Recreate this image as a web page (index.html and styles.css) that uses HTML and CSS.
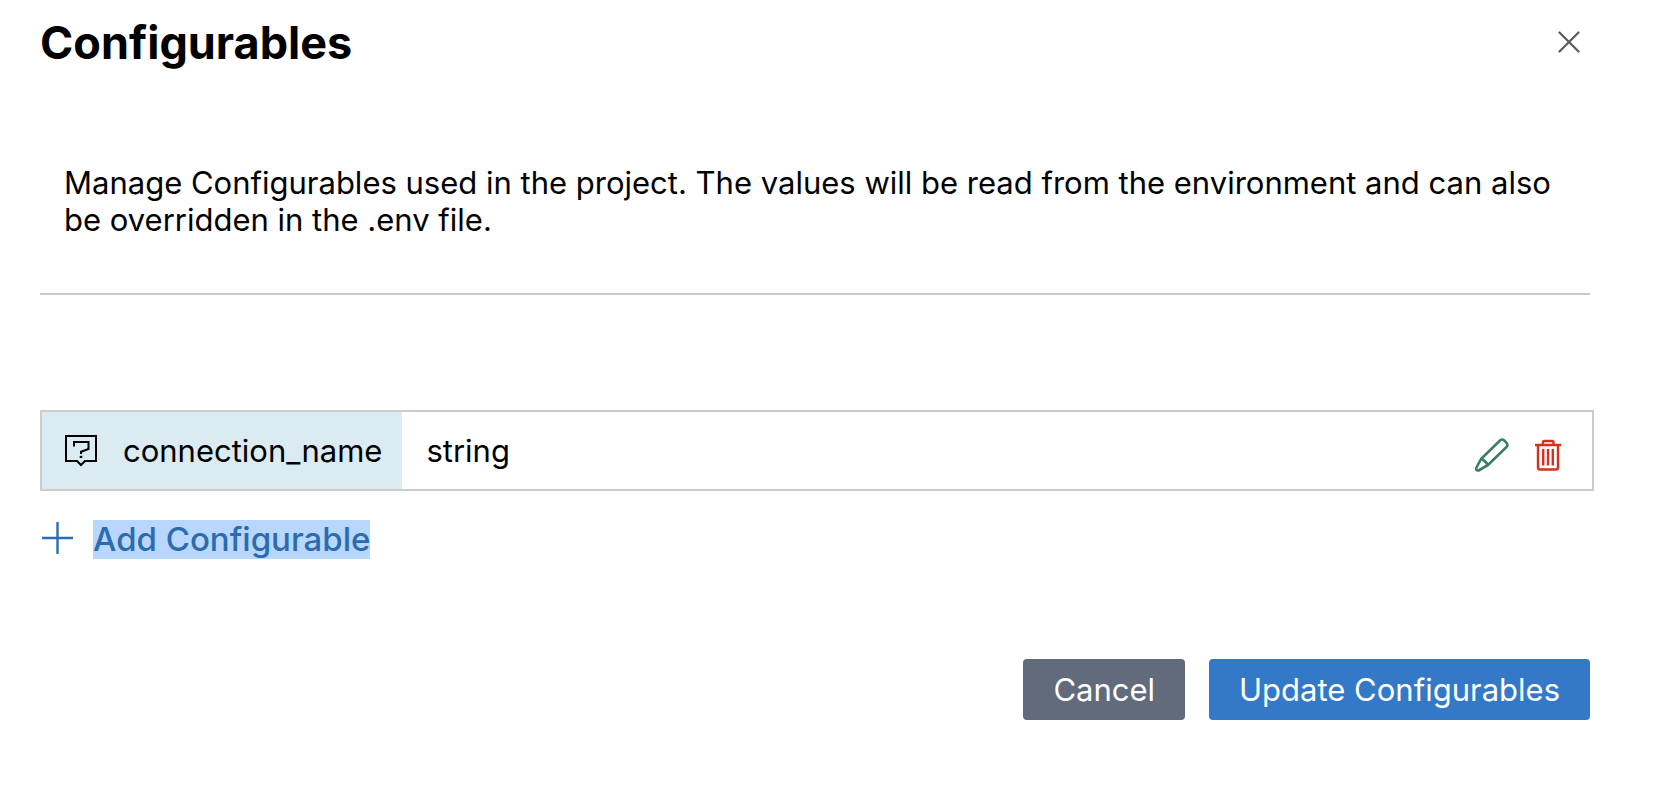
FILE: index.html
```html
<!DOCTYPE html>
<html lang="en">
<head>
<meta charset="utf-8">
<title>Configurables</title>
<meta name="viewport" content="width=device-width, initial-scale=1">
<link rel="stylesheet" href="styles.css">
</head>
<body>
<main class="dialog">
  <header class="dialog-header">
    <h1 class="title">Configurables</h1>
    <button class="icon-button close" type="button" aria-label="Close">
      <svg width="22" height="22" viewBox="0 0 22 22" fill="none" stroke="#5e5e5e" stroke-width="2.300" stroke-linecap="round"><path d="M1.500 1.500l19 19M20.500 1.500l-19 19"/></svg>
    </button>
  </header>
  <p class="intro">Manage Configurables used in the project. The values will be read from the environment and can also be overridden in the .env file.</p>
  <hr class="divider">
  <div class="row">
    <div class="row-name">
      <svg width="32" height="32" viewBox="0 0 32 32" fill="none" stroke="#000" stroke-width="2"><path d="M1 1h30v25H20l-4 4-4-4H1z"/><path d="M9 11.500V7H23.500v7L16 16.800V19" stroke-width="2"/><path d="M16 20.800v2.200" stroke-width="2.600"/></svg>
      <span>connection_name</span>
    </div>
    <span class="row-type">string</span>
    <div class="row-actions">
      <button class="icon-button" type="button" aria-label="Edit connection_name">
        <svg width="34" height="34" viewBox="0 0 34 34" fill="none" stroke="#3a8060" stroke-width="2.600" stroke-linejoin="round"><path d="M6 21L25 2.500Q27 .700 29 2.200L31.500 4.800Q33.300 7 31.500 9L13 27L3.500 32.500Q.500 33 1.500 29.500Z"/><path d="M6 21Q10.500 22.500 13 27"/></svg>
      </button>
      <button class="icon-button" type="button" aria-label="Delete connection_name">
        <svg width="26" height="32" viewBox="0 0 26 32" fill="none" stroke="#d6301d" stroke-width="2.400"><path d="M0 6h26M8 6V3.500Q8 2 9.500 2h7.500Q18.500 2 18.500 3.500V6M3 6v22.500Q3 30.500 5 30.500h16Q23 30.500 23 28.500V6M8.200 10v16.500M13 10v16.500M17.800 10v16.500"/></svg>
      </button>
    </div>
  </div>
  <button class="add" type="button">
    <svg width="32" height="36" viewBox="0 0 32 36" stroke="#2b6cb0" stroke-width="2.400"><path d="M0 16h31M15.500 0v32"/></svg>
    <span class="add-label">Add Configurable</span>
  </button>
  <footer class="actions">
    <button class="button cancel" type="button">Cancel</button>
    <button class="button update" type="submit">Update Configurables</button>
  </footer>
</main>
</body>
</html>
```
FILE: styles.css
```css
* {
  box-sizing: border-box;
}

body {
  margin: 0;
  background: #fff;
  color: #000;
  font-family: Inter, "Liberation Sans", sans-serif;
  font-size: 31px;
  line-height: 37px;
}

button {
  border: 0;
  margin: 0;
  padding: 0;
  background: none;
  font: inherit;
  cursor: pointer;
}

svg {
  display: block;
  flex: none;
}

.dialog {
  padding: 15px 64px 88px 40px;
}

.dialog-header {
  display: flex;
  justify-content: space-between;
  align-items: flex-start;
}

.title {
  margin: 0;
  font-size: 45px;
  line-height: 56px;
  font-weight: 700;
}

.close {
  margin: 16px 10px 0 0;
}

.intro {
  margin: 93px 24px 0;
}

.divider {
  margin: 55px 0 0;
  border: 0;
  height: 2px;
  background: #c8c8c8;
}

.row {
  display: flex;
  align-items: stretch;
  min-height: 81px;
  margin: 115px -4px 0 0;
  border: 2px solid #ccc;
}

.row-name {
  display: flex;
  align-items: center;
  gap: 26px;
  padding: 0 20px 0 23px;
  background: #daebf1;
}

.row-type {
  flex: 1;
  align-self: center;
  padding-left: 24px;
}

.row-actions {
  display: flex;
  align-items: center;
  gap: 26px;
  padding: 8px 31px 0 0;
}

.add {
  display: flex;
  align-items: center;
  gap: 19px;
  margin-top: 29px;
  padding-left: 2px;
  color: #2b6cb0;
  font-size: 33px;
  line-height: 39px;
  font-weight: 500;
}

.add-label {
  background: #b9d6fc;
}

.actions {
  display: flex;
  justify-content: flex-end;
  gap: 24px;
  margin-top: 100px;
}

.button {
  padding: 12px 30px;
  border-radius: 4px;
  color: #fff;
}

.cancel {
  background: #616b7b;
}

.update {
  background: #3478c8;
}
```
